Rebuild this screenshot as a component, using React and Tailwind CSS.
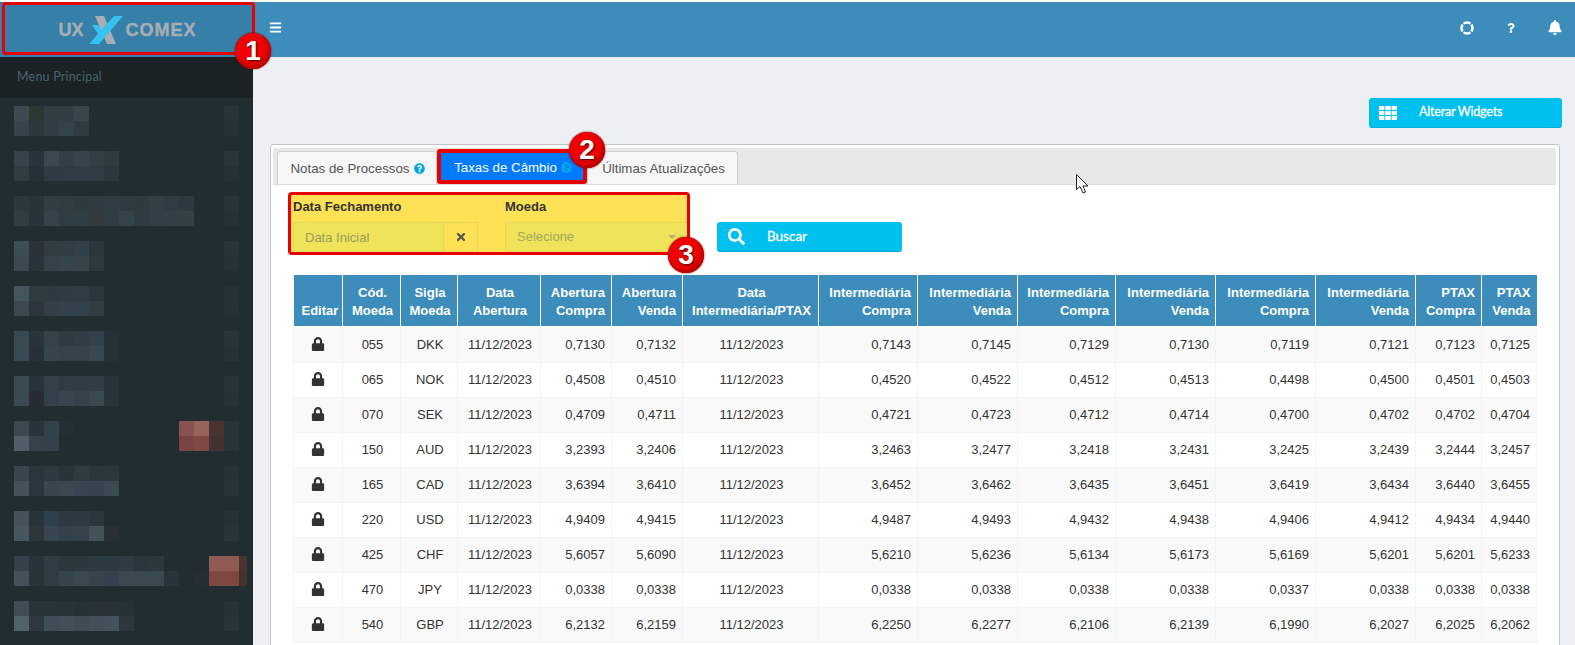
import { FaBars, FaBell, FaLock, FaQuestion, FaQuestionCircle, FaSearch, FaTimes } from "react-icons/fa";

const columns = [
  { label: ["Editar"], width: "w-[49px]", align: "text-center" },
  { label: ["Cód.", "Moeda"], width: "w-[58px]", align: "text-center" },
  { label: ["Sigla", "Moeda"], width: "w-[57px]", align: "text-center" },
  { label: ["Data", "Abertura"], width: "w-[83px]", align: "text-center" },
  { label: ["Abertura", "Compra"], width: "w-[71px]", align: "text-right" },
  { label: ["Abertura", "Venda"], width: "w-[71px]", align: "text-right" },
  { label: ["Data", "Intermediária/PTAX"], width: "w-[136px]", align: "text-center" },
  { label: ["Intermediária", "Compra"], width: "w-[99px]", align: "text-right" },
  { label: ["Intermediária", "Venda"], width: "w-[100px]", align: "text-right" },
  { label: ["Intermediária", "Compra"], width: "w-[98px]", align: "text-right" },
  { label: ["Intermediária", "Venda"], width: "w-[100px]", align: "text-right" },
  { label: ["Intermediária", "Compra"], width: "w-[100px]", align: "text-right" },
  { label: ["Intermediária", "Venda"], width: "w-[100px]", align: "text-right" },
  { label: ["PTAX", "Compra"], width: "w-[66px]", align: "text-right" },
  { label: ["PTAX", "Venda"], width: "w-[55px]", align: "text-right" },
];

const rates = [
  ["055", "DKK", "0,7130", "0,7132", "0,7143", "0,7145", "0,7129", "0,7130", "0,7119", "0,7121", "0,7123", "0,7125"],
  ["065", "NOK", "0,4508", "0,4510", "0,4520", "0,4522", "0,4512", "0,4513", "0,4498", "0,4500", "0,4501", "0,4503"],
  ["070", "SEK", "0,4709", "0,4711", "0,4721", "0,4723", "0,4712", "0,4714", "0,4700", "0,4702", "0,4702", "0,4704"],
  ["150", "AUD", "3,2393", "3,2406", "3,2463", "3,2477", "3,2418", "3,2431", "3,2425", "3,2439", "3,2444", "3,2457"],
  ["165", "CAD", "3,6394", "3,6410", "3,6452", "3,6462", "3,6435", "3,6451", "3,6419", "3,6434", "3,6440", "3,6455"],
  ["220", "USD", "4,9409", "4,9415", "4,9487", "4,9493", "4,9432", "4,9438", "4,9406", "4,9412", "4,9434", "4,9440"],
  ["425", "CHF", "5,6057", "5,6090", "5,6210", "5,6236", "5,6134", "5,6173", "5,6169", "5,6201", "5,6201", "5,6233"],
  ["470", "JPY", "0,0338", "0,0338", "0,0338", "0,0338", "0,0338", "0,0338", "0,0337", "0,0338", "0,0338", "0,0338"],
  ["540", "GBP", "6,2132", "6,2159", "6,2250", "6,2277", "6,2106", "6,2139", "6,1990", "6,2027", "6,2025", "6,2062"],
];

// pixelated menu entries: two lines of 15px cells, starting at the sidebar's left padding
const _ = null;
const blurredMenu = [
  [["#3c4a51", "#2c3632", "#313e43", "#313e43", "#39454c", _, _, _, _, _, _, _, _, _, "#29343a"],
   ["#36454c", "#2b383c", "#313f45", "#34434a", "#2f3a41", _, _, _, _, _, _, _, _, _, "#263137"]],
  [["#35434a", "#29343a", "#3a484f", "#323f45", "#36444b", "#323f45", "#2f3a41", _, _, _, _, _, _, _, "#2a353b"],
   ["#303c42", "#263137", "#2e3b42", "#2f3c43", "#303d44", "#2f3c43", "#2c373d", _, _, _, _, _, _, _, "#263137"]],
  [["#2d383e", "#29343a", "#323e44", "#303c42", "#2e3a40", "#303b41", "#2f3c43", "#2f3b41", "#2f393f", "#323f45", "#2f3c43", "#2e393f", _, _, "#29343a"],
   ["#323d43", "#29343a", "#35434a", "#303c42", "#2f3d44", "#33393f", "#303c43", "#34424a", "#303b41", "#333f46", "#343f46", "#353f46", _, _, "#263137"]],
  [["#3d4d55", "#2b3339", "#323d42", "#303e45", "#32404a", "#2b363c", _, _, _, _, _, _, _, _, "#29343a"],
   ["#3b4a52", "#29343a", "#34424a", "#36444b", "#374349", "#2e383e", _, _, _, _, _, _, _, _, "#263137"]],
  [["#45555d", "#303b41", "#2f3a40", "#2e3b42", "#2f3c43", "#2b363c", _, _, _, _, _, _, _, _, "#263137"],
   ["#3b4850", "#2e343b", "#323f46", "#33414a", "#33414a", "#323d44", _, _, _, _, _, _, _, _, "#273238"]],
  [["#3a4a52", "#29343a", "#34434a", "#2f3b41", "#303d44", "#33414a", "#263137", _, _, _, _, _, _, _, "#29343a"],
   ["#3a4a52", "#28313a", "#36454c", "#34424a", "#34424a", "#394850", "#263137", _, _, _, _, _, _, _, "#273238"]],
  [["#3a4a52", "#29343a", "#33424a", "#303c42", "#2f3d44", "#303d44", "#28333a", _, _, _, _, _, _, _, "#29343a"],
   ["#3a4a52", "#272c34", "#33424a", "#38464f", "#34434a", "#3a4850", "#29333a", _, _, _, _, _, _, _, "#273238"]],
  [["#3a4850", "#29343a", "#33414a", "#252e35", _, _, _, _, _, _, _, "#8a524e", "#97635d", "#4a3432", "#29343a"],
   ["#505f67", "#38404a", "#33424a", _, _, _, _, _, _, _, _, "#7a4440", "#7f4a45", "#443231", "#29343a"]],
  [["#38464e", "#2b363c", "#2d3a41", "#293439", "#303a41", "#2a353c", "#2c373d", _, _, _, _, _, _, _, "#273238"],
   ["#44535b", "#2b363c", "#38464e", "#3a4850", "#394550", "#36444f", "#3c4a52", _, _, _, _, _, _, _, "#29343a"]],
  [["#44525a", "#29343a", "#30404a", "#2d393f", "#2d3a41", "#2b363c", _, _, _, _, _, _, _, _, "#273238"],
   ["#465660", "#2e363c", "#38474f", "#33414a", "#34424a", "#445159", "#283036", _, _, _, _, _, _, _, "#29343a"]],
  [["#33424a", "#28333a", "#2f3d44", "#2c383e", "#2c383e", "#2c3a42", "#2c3a42", "#2e3b42", "#2a353c", "#2c383e", _, _, _, "#905b55", "#905b55", "#4a3432"],
   ["#42515a", "#29343a", "#2f3c42", "#36444c", "#3a4850", "#36444c", "#33414c", "#3a4850", "#3a4850", "#3a4850", "#29343a", _, "#272d35", "#7e4741", "#7e4741", "#443231"]],
  [["#3f4e56", "#28333a", "#29343a", "#283238", "#263137", "#283238", "#283238", "#263137", _, _, _, _, _, _, "#273238"],
   ["#52626a", "#2f383f", "#3f4d56", "#414f58", "#3f4c54", "#414f58", "#42515a", "#2d363d", _, _, _, _, _, _, "#29343a"]],
];

function Badge({ number, className }) {
  return (
    <span
      className={`absolute z-20 flex h-[36px] w-[36px] items-center justify-center rounded-full bg-[#f00000] text-[28px] font-bold text-white shadow-[0_0_2px_#500,inset_-2px_-3px_5px_#b00000] [text-shadow:1px_1px_2px_#400] ${className}`}
    >
      {number}
    </span>
  );
}

function Logo() {
  return (
    <div className="ml-[2px] flex items-center font-['Liberation_Sans',sans-serif] text-[18px] font-bold text-[#a8adb3] [-webkit-text-stroke:0.4px_#a8adb3]">
      <span>UX</span>
      <svg viewBox="0 0 34 28" className="ml-[5px] mr-[3px] h-[28px] w-[34px]">
        <polygon points="6,0 15,0 27,28 18,28" fill="#a8adb3" />
        <polygon points="3,9 9,9 17,18 13,23" fill="#37c3f2" />
        <polygon points="25,0 34,0 10,28 0,28" fill="#37c3f2" />
      </svg>
      <span className="tracking-[1px]">COMEX</span>
    </div>
  );
}

function Sidebar() {
  return (
    <aside className="h-full w-[253px] shrink-0 bg-[#222d32]">
      <div className="flex h-[41px] items-center bg-[#1a2226] pl-[17px] font-['Lato',sans-serif] text-[12.5px] tracking-[0.2px] text-[#4b646f]">
        Menu Principal
      </div>
      <div className="flex flex-col gap-[15px] pl-[14px] pt-[8px]">
        {blurredMenu.map((lines, i) => (
          <div key={i}>
            {lines.map((cells, j) => (
              <div key={j} className="flex h-[15px]">
                {cells.map((color, k) => (
                  <div
                    key={k}
                    className={k === 15 ? "h-full w-[8px]" : "h-full w-[15px]"}
                    style={{ backgroundColor: color ?? "transparent" }}
                  />
                ))}
              </div>
            ))}
          </div>
        ))}
      </div>
    </aside>
  );
}

function Tabs() {
  return (
    <div className="flex h-[37px] items-end rounded-t-[2px] border-b border-[#dcdcdc] bg-[#e8e8e8] pl-[4px] text-[13.3px]">
      <div className="flex h-[33px] w-[160px] items-center justify-center gap-[4px] rounded-t-[3px] border border-b-0 border-[#d0d0d0] bg-[#f6f6f6] pl-[1px] pt-[1px] text-[#555]">
        Notas de Processos
        <FaQuestionCircle className="text-[11px] text-[#00a7e8]" />
      </div>
      <div className="relative z-10 h-[35px] w-[150px] rounded-[3px] border-[4px] border-[#e60000] bg-[#007bff]">
        <div className="flex h-full items-center justify-center gap-[4px] pl-[2px] pt-[2px] text-white">
          Taxas de Câmbio
          <FaQuestionCircle className="text-[11px] text-[#00a7e8]" />
        </div>
      </div>
      <div className="flex h-[33px] w-[151px] items-center justify-center rounded-t-[3px] border border-b-0 border-[#d0d0d0] bg-[#f6f6f6] pl-[2px] pt-[1px] text-[#555]">
        Últimas Atualizações
      </div>
    </div>
  );
}

function Filters() {
  return (
    <div className="mt-[7px] flex items-end pl-[15px]">
      <div className="relative h-[63px] w-[402px] rounded-[4px] border-[3px] border-[#e60000] bg-[#ffe155]">
        <div className="flex overflow-hidden pl-[2px] pt-[3px] text-[13px]">
          <div className="w-[212px] shrink-0">
            <label className="block h-[24px] font-bold leading-[18px] text-[#333]">Data Fechamento</label>
            <div className="flex h-[30px]">
              <div className="flex w-[151px] items-center border border-[#e3d75c] bg-[#efe35a] pl-[11px] pt-[1px] text-[#9a9a5e]">
                Data Inicial
              </div>
              <div className="-ml-px flex w-[35px] items-center justify-center border border-[#e3d75c] text-[#555]">
                <FaTimes className="text-[12px]" />
              </div>
            </div>
          </div>
          <div className="w-[185px] shrink-0">
            <label className="block h-[24px] font-bold leading-[18px] text-[#333]">Moeda</label>
            <div className="flex h-[30px] items-center justify-between rounded-l-[2px] border border-[#e3d75c] bg-[#efe35a] pl-[11px] pr-[13px] text-[#a5a560]">
              Selecione
              <span className="h-0 w-0 border-x-[4px] border-t-[4px] border-x-transparent border-t-[#b5b070]" />
            </div>
          </div>
        </div>
      </div>
      <button className="mb-[3px] ml-[27px] flex h-[30px] w-[185px] items-center rounded-[3px] border-b border-[#00acd6] bg-[#00c0ef] pl-[11px] font-['Lato',sans-serif] text-[13.5px] text-white [-webkit-text-stroke:0.3px_white]">
        <FaSearch className="text-[17px]" />
        <span className="ml-[22px]">Buscar</span>
      </button>
    </div>
  );
}

function RatesTable() {
  return (
    <table className="ml-[20px] mt-[20px] w-[1243px] table-fixed border-collapse text-[13px]">
      <colgroup>
        {columns.map((col, i) => (
          <col key={i} className={col.width} />
        ))}
      </colgroup>
      <thead>
        <tr className="h-[52px] bg-[#3c8dbc] font-bold text-white">
          {columns.map((col, i) => (
            <th
              key={i}
              className={`border-x border-b-2 border-white pb-[6px] pl-[8px] pr-[6px] align-bottom font-bold leading-[18px] whitespace-nowrap first:border-l-0 last:border-r-0 ${col.align}`}
            >
              {col.label.map((line) => (
                <div key={line}>{line}</div>
              ))}
            </th>
          ))}
        </tr>
      </thead>
      <tbody className="text-[#333]">
        {rates.map((row, i) => {
          const [code, symbol, ...values] = row;
          const cells = [code, symbol, "11/12/2023", values[0], values[1], "11/12/2023", ...values.slice(2)];
          return (
            <tr key={code} className={i % 2 === 0 ? "h-[35.1px] bg-[#f9f9f9]" : "h-[35.1px] bg-white"}>
              <td className="border border-[#f4f4f4] pt-[9px] text-center align-top leading-[18px]">
                <FaLock className="mx-auto text-[14px] text-[#333]" />
              </td>
              {cells.map((cell, j) => (
                <td
                  key={j}
                  className={`border border-[#f4f4f4] pl-[8px] pr-[6px] pt-[8px] align-top leading-[18px] ${columns[j + 1].align}`}
                >
                  {cell}
                </td>
              ))}
            </tr>
          );
        })}
      </tbody>
    </table>
  );
}

export default function App() {
  return (
    <div className="relative h-[645px] w-[1575px] overflow-hidden bg-white pt-[2px] font-['Liberation_Sans',sans-serif]">
      <header className="flex h-[55px]">
        <div className="relative w-[253px] bg-[#367fa9]">
          <div className="flex h-full items-center justify-center pt-[1px]">
            <Logo />
          </div>
          <div className="absolute left-[2px] top-0 z-10 h-[53px] w-[253px] rounded-[4px] border-[3px] border-[#e60000]" />
          <Badge number="1" className="left-[235px] top-[31px]" />
        </div>
        <div className="flex flex-1 items-center justify-between bg-[#3c8dbc] pb-[4px] pl-[16px] pr-[13px] text-white">
          <FaBars className="text-[13px]" />
          <div className="flex items-center gap-[30px]">
            <svg viewBox="0 0 14 14" className="h-[14px] w-[14px]">
              <circle cx="7" cy="7" r="5.5" fill="none" stroke="white" strokeWidth="2.6" />
              <path d="M2 2 L5 5 M12 2 L9 5 M2 12 L5 9 M12 12 L9 9" stroke="#3c8dbc" strokeWidth="1.1" />
            </svg>
            <div className="flex w-[14px] justify-center">
              <FaQuestion className="text-[10px]" />
            </div>
            <FaBell className="w-[14px] text-[15px]" />
          </div>
        </div>
      </header>
      <div className="flex h-[588px] bg-[#ecf0f5]">
        <Sidebar />
        <main className="relative min-w-0 flex-1 pl-[17px] pr-[15px]">
          <div className="flex justify-end pt-[41px]">
            <button className="-mr-[2px] flex h-[30px] w-[193px] items-center rounded-[3px] border-b border-[#00acd6] bg-[#00c0ef] pl-[10px] font-['Lato',sans-serif] text-[12.5px] tracking-[-0.2px] text-white [-webkit-text-stroke:0.3px_white]">
              <svg viewBox="0 0 18 14" className="h-[14px] w-[18px]" fill="white">
                <rect x="0" y="0" width="5.4" height="4" />
                <rect x="6.3" y="0" width="5.4" height="4" />
                <rect x="12.6" y="0" width="5.4" height="4" />
                <rect x="0" y="5" width="5.4" height="4" />
                <rect x="6.3" y="5" width="5.4" height="4" />
                <rect x="12.6" y="5" width="5.4" height="4" />
                <rect x="0" y="10" width="5.4" height="4" />
                <rect x="6.3" y="10" width="5.4" height="4" />
                <rect x="12.6" y="10" width="5.4" height="4" />
              </svg>
              <span className="ml-[22px]">Alterar Widgets</span>
            </button>
          </div>
          <section className="mt-[16px] h-[600px] rounded-t-[3px] border border-[#c4c4c4] bg-white pl-[2px] pr-[3px] pt-[3px]">
            <Tabs />
            <Filters />
            <RatesTable />
          </section>
          <svg viewBox="0 0 13 20" className="absolute left-[823px] top-[117px] z-20 h-[20px] w-[13px]">
            <path d="M0.5 0.5 L0.5 15.5 L4 12.5 L7 19 L9.5 18 L7 12 L12 12 Z" fill="white" stroke="#222" strokeWidth="1" />
          </svg>
          <Badge number="2" className="left-[316px] top-[75px]" />
          <Badge number="3" className="left-[415px] top-[180px]" />
        </main>
      </div>
    </div>
  );
}
